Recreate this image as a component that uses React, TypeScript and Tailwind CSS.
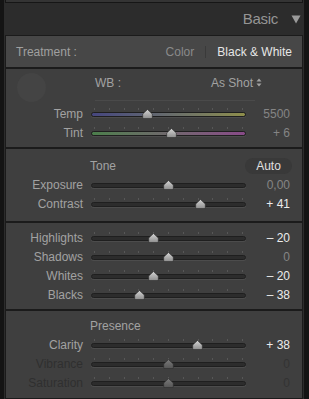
import React from 'react'

type SliderRow = {
  label: string
  value: string
  pos: number
  changed?: boolean
  dim?: boolean
  ticks?: boolean
  track?: string
}

const toneRows: SliderRow[] = [
  { label: 'Exposure', value: '0,00', pos: 0, ticks: false },
  { label: 'Contrast', value: '+ 41', pos: 41, changed: true },
]

const detailRows: SliderRow[] = [
  { label: 'Highlights', value: '– 20', pos: -20, changed: true },
  { label: 'Shadows', value: '0', pos: 0 },
  { label: 'Whites', value: '– 20', pos: -20, changed: true },
  { label: 'Blacks', value: '– 38', pos: -38, changed: true },
]

const presenceRows: SliderRow[] = [
  { label: 'Clarity', value: '+ 38', pos: 38, changed: true },
  { label: 'Vibrance', value: '0', pos: 0, dim: true },
  { label: 'Saturation', value: '0', pos: 0, dim: true },
]

function Thumb({ dim, pos }: { dim?: boolean; pos: number }) {
  const id = dim ? 'thumb-dim' : 'thumb'
  return (
    <svg
      width="11"
      height="10"
      viewBox="0 0 11 10"
      className="absolute top-[5px] -ml-[5.5px]"
      style={{ left: `${50 + pos / 2}%` }}
    >
      <defs>
        <linearGradient id={id} x1="0" y1="0" x2="0" y2="1">
          <stop offset="0" stopColor={dim ? '#7a7a7a' : '#d4d4d4'} />
          <stop offset="1" stopColor={dim ? '#555555' : '#8e8e8e'} />
        </linearGradient>
      </defs>
      <path
        d="M5.5 0.5 L10.3 5 L10.3 8.6 Q10.3 9.6 9.3 9.6 L1.7 9.6 Q0.7 9.6 0.7 8.6 L0.7 5 Z"
        fill={`url(#${id})`}
        stroke="#2a2a2a"
        strokeWidth="0.6"
      />
    </svg>
  )
}

function Slider({ row }: { row: SliderRow }) {
  return (
    <div className="relative h-[19px] w-[155px] shrink-0">
      {row.ticks !== false && (
        <div className="absolute left-[3px] right-[3px] top-[4px] flex justify-between">
          {Array.from({ length: 11 }).map((_, i) => (
            <span key={i} className="h-[2px] w-px bg-[#575757]" />
          ))}
        </div>
      )}
      <div
        className={`absolute left-0 right-0 top-[8px] h-[5px] rounded-full border border-[#1f1f1f] shadow-[0_1px_0_#4c4c4c] ${
          row.track ?? 'bg-[#2c2c2c]'
        }`}
      />
      <Thumb dim={row.dim} pos={row.pos} />
    </div>
  )
}

function Row({ row }: { row: SliderRow }) {
  const labelColor = row.dim ? 'text-[#2f2f2f]' : 'text-[#a2a2a2]'
  const valueColor = row.dim ? 'text-[#333333]' : row.changed ? 'text-[#ececec]' : 'text-[#858585]'
  return (
    <div className="flex h-[19px] items-center">
      <div className={`w-[77px] text-right leading-none ${labelColor}`}>{row.label}</div>
      <div className="ml-[8px]">
        <Slider row={row} />
      </div>
      <div className={`w-[44px] text-right leading-none ${valueColor}`}>{row.value}</div>
    </div>
  )
}

function Separator() {
  return <div className="h-[2px] bg-[#1b1b1b]" />
}

export default function App() {
  return (
    <div className="flex h-[399px] w-[309px] overflow-hidden bg-[#2c2c2c] font-['Liberation_Sans',Arial,sans-serif] text-[12px]">
      <div className="w-[4px] shrink-0 bg-[#141414]" />
      <div className="flex w-[300px] flex-col">
        <div className="mx-[1px] h-[3px] border-x border-b border-[#161616] bg-[#343434]" />
        <div className="flex h-[32px] items-center justify-end pr-[3px]">
          <span className="text-[15px] tracking-[-0.3px] text-[#959595]">Basic</span>
          <svg width="10" height="9" viewBox="0 0 10 9" className="ml-[13px] mt-[1px]">
            <path d="M0.5 0.5 L9.5 0.5 L5 8.5 Z" fill="#9a9a9a" />
          </svg>
        </div>
        <div className="ml-[1px] mr-[1px] flex-1 border border-[#1b1b1b] bg-[#3f3f3f]">
          <div className="flex h-[31px] items-center bg-[#474747] pl-[10px] pr-[10px]">
            <span className="text-[#a0a0a0]">Treatment :</span>
            <span className="ml-auto text-[#8a8a8a]">Color</span>
            <span className="mx-[11px] h-[12px] w-px bg-[#3a3a3a]" />
            <span className="text-[#e6e6e6]">Black &amp; White</span>
          </div>
          <Separator />

          <div className="pb-[5px] pt-[4px]">
            <div className="flex h-[29px] items-start">
              <div className="ml-[11px] h-[29px] w-[29px] rounded-full bg-[#444444]" />
              <div className="ml-[49px] flex w-[171px] flex-col">
                <div className="flex h-[19px] items-center pr-[4px] text-[#a2a2a2]">
                  <span>WB :</span>
                  <span className="ml-auto flex items-center">
                    As Shot
                    <svg width="6" height="9" viewBox="0 0 6 9" className="ml-[3px]">
                      <path d="M3 0.5 L5.5 3.5 L0.5 3.5 Z M3 8.5 L5.5 5.5 L0.5 5.5 Z" fill="#a2a2a2" />
                    </svg>
                  </span>
                </div>
                <div className="mt-[8px] h-px w-[160px] bg-[#4a4a4a]" />
              </div>
            </div>
            <div className="mt-[2px]">
              <Row row={{ label: 'Temp', value: '5500', pos: -27, track: 'bg-linear-to-r from-[#46467e] to-[#8e8e4a]' }} />
              <Row row={{ label: 'Tint', value: '+ 6', pos: 4, track: 'bg-linear-to-r from-[#4b7e4b] to-[#884a88]' }} />
            </div>
          </div>
          <Separator />

          <div className="pb-[8px] pt-[7px]">
            <div className="flex h-[19px] items-center pl-[84px] pr-[10px]">
              <span className="text-[#a2a2a2]">Tone</span>
              <span className="ml-auto flex h-[16px] w-[47px] items-center justify-center rounded-full bg-[#393939] text-[#e0e0e0]">
                Auto
              </span>
            </div>
            {toneRows.map((r) => (
              <Row key={r.label} row={r} />
            ))}
          </div>
          <Separator />

          <div className="pb-[5px] pt-[5px]">
            {detailRows.map((r) => (
              <Row key={r.label} row={r} />
            ))}
          </div>
          <Separator />

          <div className="pt-[5px]">
            <div className="flex h-[19px] items-center pl-[84px] text-[#a2a2a2]">Presence</div>
            {presenceRows.map((r) => (
              <Row key={r.label} row={r} />
            ))}
          </div>
        </div>
      </div>
      <div className="w-[5px] shrink-0 bg-[#141414]" />
    </div>
  )
}
